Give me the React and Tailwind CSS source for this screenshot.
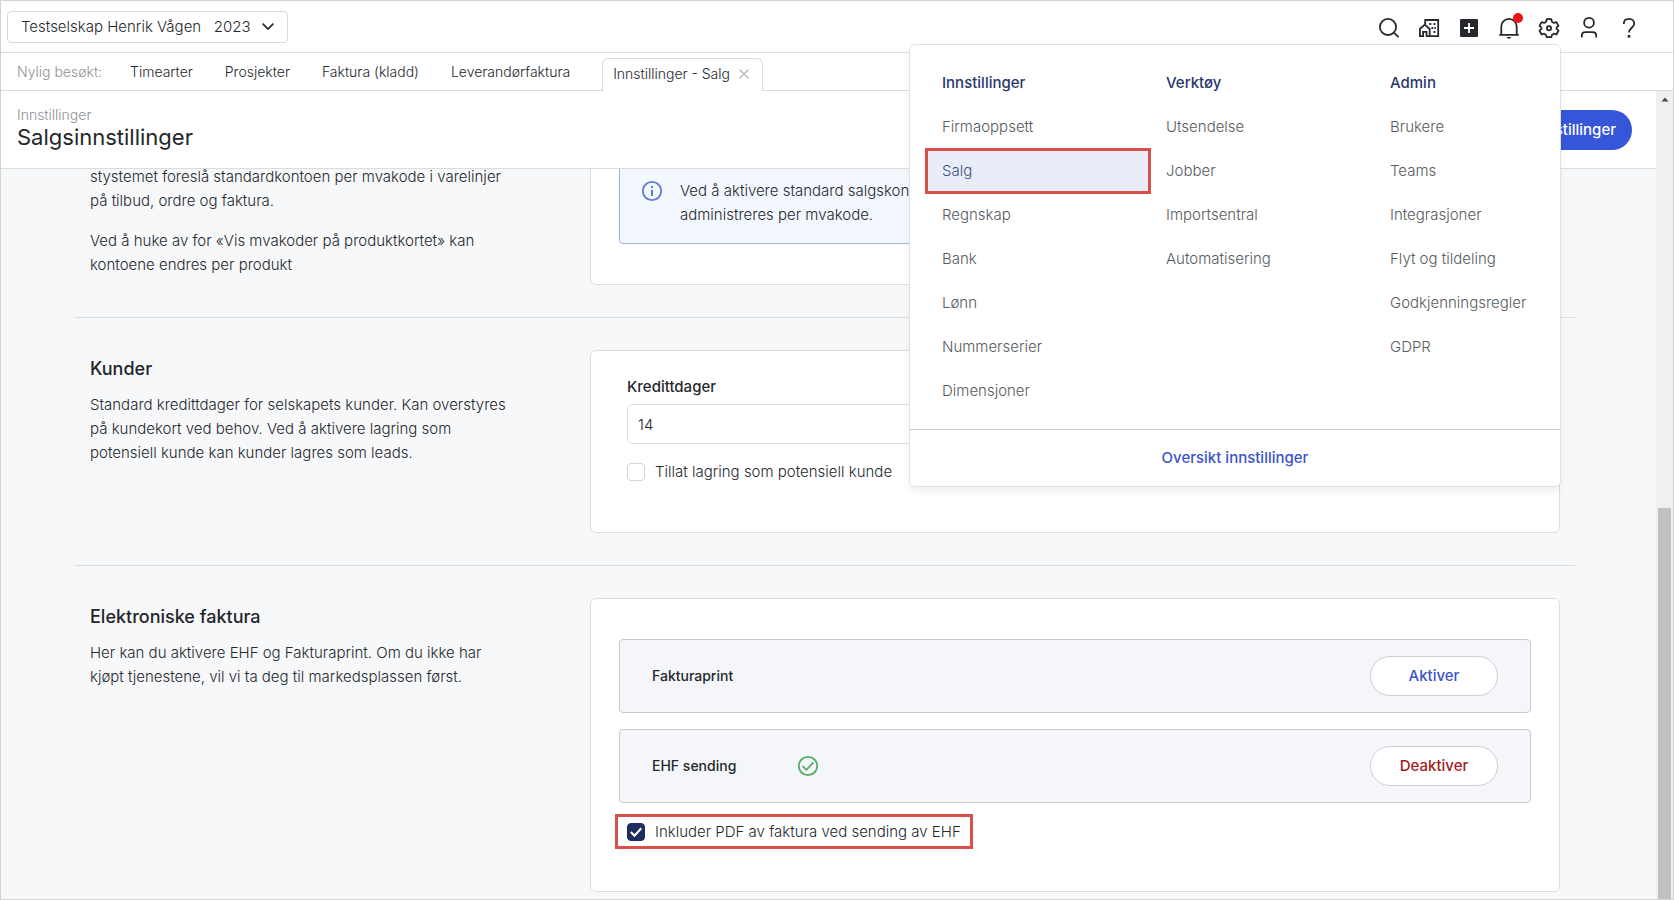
import clsx from 'clsx';

const recent = ['Timearter', 'Prosjekter', 'Faktura (kladd)', 'Leverandørfaktura'];

const menu = [
  {
    title: 'Innstillinger',
    items: ['Firmaoppsett', 'Salg', 'Regnskap', 'Bank', 'Lønn', 'Nummerserier', 'Dimensjoner'],
  },
  { title: 'Verktøy', items: ['Utsendelse', 'Jobber', 'Importsentral', 'Automatisering'] },
  {
    title: 'Admin',
    items: ['Brukere', 'Teams', 'Integrasjoner', 'Flyt og tildeling', 'Godkjenningsregler', 'GDPR'],
  },
];

function Icon({ children, className = 'w-6 h-6' }) {
  return (
    <svg
      viewBox="0 0 24 24"
      className={className}
      fill="none"
      stroke="currentColor"
      strokeWidth="1.8"
      aria-hidden="true"
    >
      {children}
    </svg>
  );
}

function SearchIcon() {
  return (
    <Icon>
      <circle cx="11" cy="12" r="8.1" />
      <path d="M16.8 17.6 21.6 22.2" />
    </Icon>
  );
}

function CompanyIcon() {
  return (
    <Icon>
      <path d="M8.200 9V5h13v16.200h-8.400" />
      <path d="M2.900 21.200v-7.200l4.900-4.400 4.900 4.400v7.200H9.500v-4.400H6.100v4.400z" />
      <path
        d="M12.300 8h1.900v1.900h-1.900zM16.500 8h1.900v1.900h-1.900zM14.400 12h1.900v1.900h-1.900zM17.400 12h1.500v1.900h-1.500zM16.500 16h1.900v1.900h-1.900z"
        fill="currentColor"
        stroke="none"
      />
    </Icon>
  );
}

function AddIcon() {
  return (
    <Icon>
      <rect x="3" y="4" width="18" height="18" rx="1" fill="currentColor" stroke="none" />
      <path d="M12 8v10M7 13h10" stroke="white" />
    </Icon>
  );
}

function BellIcon() {
  return (
    <Icon>
      <path d="M2.200 19.800h19.600M4.300 19.800V11.500a7.700 7.700 0 0 1 15.400 0v8.300" />
      <path d="M9.800 22h4.400a2.200 1.800 0 0 1-4.400 0z" fill="currentColor" stroke="none" />
    </Icon>
  );
}

function GearIcon() {
  return (
    <Icon>
      <path
        d="M9.700 4.200h4.600l.6 2.500 2 1.200 2.500-.8 2.100 3.800-1.900 1.800v1.200l1.900 1.800-2.100 3.800-2.500-.8-2 1.200-.6 2.300H9.700l-.6-2.300-2-1.200-2.500.8-2.100-3.800 1.900-1.800v-1.200l-1.900-1.800 2.100-3.800 2.500.8 2-1.200z"
        strokeLinejoin="round"
      />
      <circle cx="12" cy="13.200" r="2.100" />
    </Icon>
  );
}

function UserIcon() {
  return (
    <Icon>
      <circle cx="12" cy="7.700" r="4.900" />
      <path d="M4.800 22.500v-1.800c0-2.300 1.200-3.500 3.500-3.500h7.400c2.300 0 3.500 1.200 3.500 3.500v1.800" />
    </Icon>
  );
}

function HelpIcon() {
  return (
    <Icon>
      <path d="M6.800 9C6.800 5.700 9 3.900 12 3.900s5.200 1.900 5.200 4.700c0 4.200-5.200 4.100-5.200 9" />
      <rect x="10.700" y="20" width="2.600" height="2.600" fill="currentColor" stroke="none" />
    </Icon>
  );
}

function InfoIcon() {
  return (
    <Icon className="w-6 h-6 shrink-0 text-[#5f7fce]">
      <circle cx="12" cy="12" r="9.200" />
      <path d="M12 10.800V17M12 7v2" strokeWidth="2" />
    </Icon>
  );
}

function SuccessIcon() {
  return (
    <Icon className="w-6 h-6 text-[#5cab68]">
      <circle cx="12" cy="12" r="9.200" />
      <path d="m6.400 12 4 3.800 7-7.400" />
    </Icon>
  );
}

const tools = [
  { label: 'Søk', icon: SearchIcon },
  { label: 'Selskap', icon: CompanyIcon },
  { label: 'Ny', icon: AddIcon },
  { label: 'Varsler', icon: BellIcon, dot: true },
  { label: 'Innstillinger', icon: GearIcon },
  { label: 'Bruker', icon: UserIcon },
  { label: 'Hjelp', icon: HelpIcon },
];

function SettingsMenu() {
  return (
    <nav className="absolute top-[43px] right-[112px] z-20 w-[652px] bg-white border border-[#dfe2e4] rounded-md shadow-[0_6px_6px_rgba(0,0,0,0.05)]">
      <div className="grid grid-cols-[224px_224px_auto] p-4">
        {menu.map((group) => (
          <div key={group.title}>
            <h2 className="h-11 px-4 flex items-center font-medium text-[#28366a]">{group.title}</h2>
            <ul>
              {group.items.map((item) => (
                <li key={item}>
                  <a
                    href="#"
                    className={clsx(
                      'h-11 px-4 flex items-center',
                      item === 'Salg'
                        ? 'bg-[#e9edf8] text-[#3f5084] outline-3 -outline-offset-2 outline-[#d9504b]'
                        : 'text-[#565b60]'
                    )}
                  >
                    {item}
                  </a>
                </li>
              ))}
            </ul>
          </div>
        ))}
      </div>
      <div className="border-t border-[#c9cccf] h-[57px] flex items-center justify-center">
        <a href="#" className="font-medium text-[#3a53c9]">Oversikt innstillinger</a>
      </div>
    </nav>
  );
}

function TopBar() {
  return (
    <header className="relative h-[52px] shrink-0 flex items-center justify-between pl-1.5 pr-8 border-b border-[#dcdfe1]">
      <div className="relative flex items-center">
        <select
          aria-label="Selskap og år"
          className="appearance-none h-8 w-[281px] pl-[13px] border border-[#d5dadd] rounded bg-white"
        >
          <option>Testselskap Henrik Vågen&nbsp;&nbsp;&nbsp;2023</option>
        </select>
        <Icon className="absolute right-3 w-4 h-4 pointer-events-none">
          <path d="m4 7 8 8 8-8" strokeWidth="2.600" />
        </Icon>
      </div>
      <div className="flex gap-4">
        {tools.map(({ label, icon: ToolIcon, dot }) => (
          <button key={label} aria-label={label} className="relative w-6 h-6">
            <ToolIcon />
            {dot && <span className="absolute -top-0.5 -right-0.5 w-2.5 h-2.5 rounded-full bg-[#ea1414]" />}
          </button>
        ))}
      </div>
      <SettingsMenu />
    </header>
  );
}

function TabBar() {
  return (
    <nav className="h-[38px] shrink-0 flex pl-4 text-sm border-b border-[#d7dcde]">
      <div className="flex items-center gap-8 mr-8">
        <span className="text-[#8d9297] -mr-1">Nylig besøkt:</span>
        {recent.map((name) => (
          <a key={name} href="#">{name}</a>
        ))}
      </div>
      <div className="flex items-center gap-2 mt-[5px] -mb-px pb-0.5 pl-2.5 pr-3 bg-white border border-b-0 border-[#d7dcde] rounded-t-md">
        <a href="#">Innstillinger - Salg</a>
        <button aria-label="Lukk fane" className="text-[#b3b7ba]">
          <Icon className="w-3 h-3">
            <path d="M3 3l18 18M21 3 3 21" strokeWidth="2.600" />
          </Icon>
        </button>
      </div>
    </nav>
  );
}

function PageHeader() {
  return (
    <div className="h-[78px] shrink-0 flex items-center justify-between pl-4 pr-6 bg-white border-b border-[#d9dddf]">
      <div className="pb-1.5">
        <p className="text-sm leading-5 text-[#8d9297]">Innstillinger</p>
        <h1 className="text-[22px] leading-6 font-normal text-[#222629]">Salgsinnstillinger</h1>
      </div>
      <button className="h-10 px-4 rounded-full bg-[#3656d9] text-white font-medium">
        Lagre innstillinger
      </button>
    </div>
  );
}

function Section({ title, text, children, className }) {
  return (
    <section className="grid grid-cols-3 px-[15px]">
      <div className="pt-[7px]">
        {title && <h2 className="mb-3 text-lg leading-6 font-medium text-[#222629]">{title}</h2>}
        <div className="space-y-4 whitespace-pre-line">
          {text.map((p) => (
            <p key={p}>{p}</p>
          ))}
        </div>
      </div>
      <div className="col-span-2 pl-[10px]">
        <div className={clsx('bg-white border border-[#dbdfe1] rounded-md', className)}>{children}</div>
      </div>
    </section>
  );
}

function Service({ name, active }) {
  return (
    <div className="h-[74px] px-8 flex items-center bg-[#f4f6f9] border border-[#c8ccd0] rounded">
      <span className="w-36 text-sm font-medium">{name}</span>
      {active && <SuccessIcon />}
      <button
        className={clsx(
          'ml-auto w-32 h-10 rounded-full bg-white border border-[#cdd0d3] font-medium',
          active ? 'text-[#a42024]' : 'text-[#3a53c9]'
        )}
      >
        {active ? 'Deaktiver' : 'Aktiver'}
      </button>
    </div>
  );
}

function Checkbox({ label, defaultChecked, className }) {
  return (
    <label className={clsx('w-fit flex items-center gap-2.5', className)}>
      <span className="relative flex">
        <input
          type="checkbox"
          defaultChecked={defaultChecked}
          className="peer appearance-none w-[18px] h-[18px] rounded border border-[#d2d6d9] bg-white checked:bg-[#1d2d5c] checked:border-[#1d2d5c]"
        />
        <Icon className="absolute inset-0 w-[18px] h-[18px] text-white pointer-events-none hidden peer-checked:block">
          <path d="m5 12 5 5 9-10" strokeWidth="2.800" />
        </Icon>
      </span>
      {label}
    </label>
  );
}

function Scrollbar() {
  return (
    <div className="w-[17px] shrink-0 flex flex-col justify-between items-center bg-[#f0f0f0]" aria-hidden="true">
      <svg viewBox="0 0 16 16" className="w-4 h-4">
        <path d="M4.500 10.500h7L8 6.500z" fill="#4a4a4a" />
      </svg>
      <div className="w-[13px] h-[48.4%] bg-[#c0c1c1]" />
    </div>
  );
}

export default function App() {
  return (
    <div className="h-screen flex flex-col overflow-hidden bg-white border border-[#d1d3d5] font-[Inter,sans-serif] font-light text-[15px] leading-6 text-[#25292d]">
      <TopBar />
      <TabBar />
      <div className="flex-1 min-h-0 flex">
        <div className="flex-1 min-w-0 flex flex-col">
          <PageHeader />
          {/* Scrolled to the end, so the content hangs from the bottom edge */}
          <main className="flex-1 min-h-0 overflow-hidden flex flex-col justify-end pl-[74px] pr-[81px] pb-[7px] bg-[#f7f8fa]">
            <Section
              text={[
                'stystemet foreslå standardkontoen per mvakode i varelinjer\npå tilbud, ordre og faktura.',
                'Ved å huke av for «Vis mvakoder på produktkortet» kan\nkontoene endres per produkt',
              ]}
              className="-mt-[25px] px-7 pt-7 pb-10"
            >
              <div className="flex gap-4 px-5 py-4 bg-[#f3f7fe] border border-[#9db5df] rounded">
                <InfoIcon />
                <p>
                  Ved å aktivere standard salgskontoer kan kontoene
                  <br />
                  administreres per mvakode.
                </p>
              </div>
            </Section>
            <hr className="my-8 border-[#dadee0]" />
            <Section
              title="Kunder"
              text={[
                'Standard kredittdager for selskapets kunder. Kan overstyres\npå kundekort ved behov. Ved å aktivere lagring som\npotensiell kunde kan kunder lagres som leads.',
              ]}
              className="px-9 pt-6 pb-12"
            >
              <label htmlFor="credit" className="block mb-[5px] font-medium">Kredittdager</label>
              <input
                id="credit"
                defaultValue="14"
                className="w-full h-10 px-2.5 border border-[#d9dcde] rounded-md bg-white"
              />
              <Checkbox label="Tillat lagring som potensiell kunde" className="mt-4" />
            </Section>
            <hr className="my-8 border-[#dadee0]" />
            <Section
              title="Elektroniske faktura"
              text={[
                'Her kan du aktivere EHF og Fakturaprint. Om du ikke har\nkjøpt tjenestene, vil vi ta deg til markedsplassen først.',
              ]}
              className="px-7 pt-10 pb-[42px]"
            >
              <div className="space-y-4">
                <Service name="Fakturaprint" />
                <Service name="EHF sending" active />
              </div>
              <Checkbox
                label="Inkluder PDF av faktura ved sending av EHF"
                defaultChecked
                className="mt-[11px] -ml-1 h-[35px] px-[9px] border-3 border-[#d9504b]"
              />
            </Section>
          </main>
        </div>
        <Scrollbar />
      </div>
    </div>
  );
}
